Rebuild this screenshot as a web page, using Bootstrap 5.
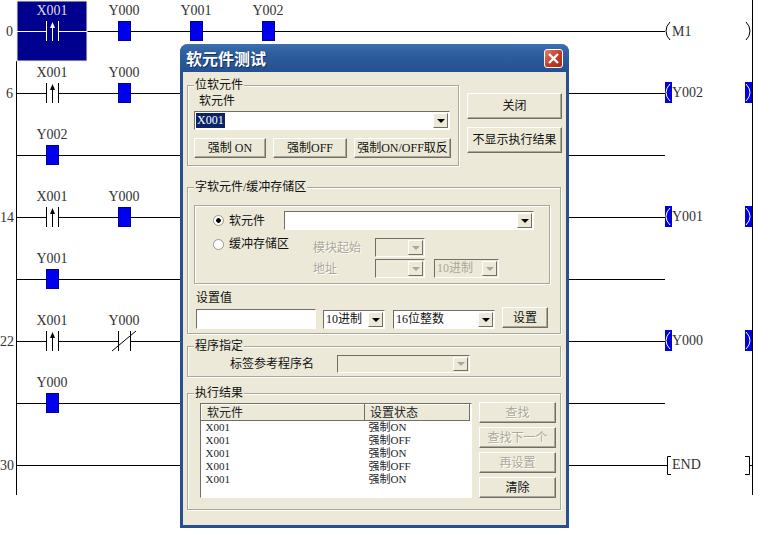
<!DOCTYPE html>
<html lang="zh-CN">
<head>
  <meta charset="UTF-8">
  <title>软元件测试</title>
  <meta name="viewport" content="width=device-width, initial-scale=1">
  <link href="https://cdn.jsdelivr.net/npm/bootstrap@5.3.2/dist/css/bootstrap.min.css" rel="stylesheet">
  <style>
    html, body { width: 778px; height: 535px; overflow: hidden; background: #fff; }
    body { position: relative; font: 12px/16px "Liberation Serif", "Noto Sans CJK SC", serif; color: #111; }

    /* ladder canvas */
    .ladder { position: absolute; left: 0; top: 0; }
    .ladder text { font: 14px "Liberation Serif", serif; fill: #333; }
    .ladder .num { text-anchor: end; }
    .ladder .dev { text-anchor: middle; }
    .ladder .dev-sel { fill: #ddd; }
    .ladder .wire { stroke: #000; stroke-width: 1; fill: none; }
    .ladder .wire-w { stroke: #fff; stroke-width: 1; fill: none; }
    .ladder .block { fill: #0000ee; stroke: #00009a; stroke-width: 1; }
    .ladder .coil-b { fill: #0000d8; }

    /* dialog window */
    .dlg { position: absolute; left: 180px; top: 44px; width: 389px; height: 484px; background: #ece9d8;
      border: 3px solid #28508f; border-top: 0; border-radius: 8px 8px 0 0; }
    .dlg-title { height: 28px; margin: 0 -3px; padding: 0 6px; border-radius: 8px 8px 0 0;
      background: linear-gradient(#3d70b0, #2f5f9f 30%, #24508f); }
    .dlg-title span { font: 700 16px/28px "Noto Sans CJK SC", sans-serif; color: #fff; text-shadow: 1px 1px 0 #14305e; }
    .dlg-close { width: 19px; height: 19px; flex: none; border: 1px solid #fff; border-radius: 3px;
      background: linear-gradient(135deg, #e0806c, #c63a26 55%, #a82a1c); }
    .dlg-body { padding: 13px 4px 0; }

    .grp { position: relative; border: 1px solid #aca899; box-shadow: inset 1px 1px 0 #fff, 1px 1px 0 #fff; }
    .grp-name { position: absolute; left: 6px; top: -9px; padding: 0 1px; background: #ece9d8; line-height: 16px; }
    .grp-bit { width: 272px; height: 81px; padding-top: 7px; }
    .grp-word { width: 374px; height: 147px; margin-top: 21px; padding-top: 17px; }
    .grp-prog { width: 374px; height: 31px; margin-top: 12px; padding-top: 8px; }
    .grp-res { width: 374px; height: 117px; margin-top: 16px; padding-top: 9px; }
    .grp-inner { width: 356px; height: 79px; margin-left: 6px; padding-top: 5px; }

    /* raised win buttons */
    .btn.wbtn { --bs-btn-padding-x: 0; --bs-btn-padding-y: 0; --bs-btn-font-size: 12px; --bs-btn-line-height: 1;
      --bs-btn-color: #111; --bs-btn-bg: #ece9d8; --bs-btn-border-radius: 0; --bs-btn-border-width: 1px;
      --bs-btn-disabled-opacity: 1; --bs-btn-disabled-color: #aca899; --bs-btn-disabled-bg: #ece9d8;
      border-color: #fff #716f64 #716f64 #fff; box-shadow: inset -1px -1px 0 #aca899;
      font-family: "Liberation Serif", "Noto Sans CJK SC", serif; white-space: nowrap; }
    .btn.wbtn:disabled { border-color: #fff #716f64 #716f64 #fff; text-shadow: 1px 1px 0 #fff; }
    .side-col { width: 95px; margin-left: 8px; margin-top: 8px; }
    .side-col .wbtn { height: 26px; }
    .force-row { margin: 8px 0 0 6px; gap: 7px; }
    .force-row .wbtn { height: 20px; }
    .force-row .wbtn:nth-child(1) { width: 72px; }
    .force-row .wbtn:nth-child(2) { width: 74px; }
    .force-row .wbtn:nth-child(3) { width: 97px; }
    .res-col { width: 77px; margin-left: 7px; margin-top: -1px; }
    .res-col .wbtn { height: 21px; }
    .btn.btn-set { width: 46px; height: 21px; margin-left: 7px; }

    /* combos and inputs */
    .cmb { height: 19px; background: #fff; border: 1px solid; border-color: #716f64 #fff #fff #716f64;
      padding: 1px; line-height: 15px; }
    .cmb-txt { padding-left: 1px; overflow: hidden; white-space: nowrap; }
    .cmb-arr { width: 15px; margin-left: auto; background: #ece9d8; border: 1px solid;
      border-color: #fff #716f64 #716f64 #fff; flex: none; }
    .cmb-arr::after { content: ""; border: 4px solid transparent; border-top: 4px solid #000; border-bottom: 0; }
    .cmb-off { background: #ece9d8; color: #aca899; }
    .cmb-off .cmb-arr::after { border-top-color: #aca899; }
    .sel-txt { background: #0a246a; color: #fff; padding: 0 1px; line-height: 14px; }
    .txt-off { color: #aca899; text-shadow: 1px 1px 0 #fff; }
    .val-in { width: 120px; height: 20px; background: #fff; border: 1px solid; border-color: #716f64 #fff #fff #716f64; }
    .cmb-bit { width: 256px; margin: 2px 0 0 6px; }
    .cmb-dev { width: 250px; }
    .cmb-mod { width: 50px; }
    .cmb-radix { width: 65px; margin-left: 9px; }
    .cmb-a { width: 62px; margin-left: 7px; }
    .cmb-b { width: 102px; margin-left: 8px; }
    .cmb.cmb-prog { width: 133px; height: 18px; }

    /* labels and rows */
    .lbl-dev { height: 16px; margin-left: 11px; }
    .row-dev { padding-left: 18px; }
    .lbl-kind { width: 55px; }
    .row-buf { margin-top: 8px; padding-left: 18px; }
    .col-buf { width: 100px; height: 12px; }
    .lbl-addr { width: 62px; }
    .row-addr { margin-top: 2px; }
    .lbl-val { margin: 6px 0 0 8px; height: 16px; }
    .row-val { height: 22px; margin: 1px 0 0 8px; }
    .lbl-prog { width: 107px; margin-left: 42px; }

    /* radios */
    .rad.form-check-input { width: 11px; height: 11px; margin: 0 5px 0 0; float: none; flex: none;
      border: 1px solid #9a988c; background-color: #fff; background-image: none; }
    .rad.form-check-input:checked { background-color: #fff; border-color: #9a988c;
      background-image: radial-gradient(circle, #000 2px, transparent 2.6px); }

    /* result list */
    .res-list { width: 272px; height: 95px; margin-left: 12px; background: #fff; border: 1px solid;
      border-color: #716f64 #fff #fff #716f64; overflow: hidden; }
    .res-list .table { --bs-table-bg: transparent; width: 268px; table-layout: fixed; margin: 0; font-size: 11px; }
    .res-list th { height: 16px; padding: 0 0 0 5px; font-weight: 400; font-size: 12px; line-height: 14px; background: #ece9d8;
      border: 1px solid; border-color: #fff #716f64 #716f64 #fff; }
    .res-list td { height: 13px; padding: 0 0 0 4px; border: 0; line-height: 13px; }
    .col-a { width: 163px; }
    .col-b { width: 105px; }
  </style>
</head>
<body>

  <!-- ladder: free canvas -->
  <svg class="ladder" width="778" height="535" viewBox="0 0 778 535">
    <defs>
      <symbol id="rise" width="14" height="20" overflow="visible">
        <path d="M.5 0V20M12.5 0V20M6.5 4V20" stroke="currentColor" fill="none"/>
        <path d="M6.5 1L4 7H9Z" fill="currentColor"/>
      </symbol>
    </defs>

    <path class="wire" d="M16.5 61V495M752.5 0V495"/>

    <text class="num" x="13" y="36">0</text>
    <text class="num" x="13" y="98">6</text>
    <text class="num" x="14" y="222">14</text>
    <text class="num" x="14" y="346">22</text>
    <text class="num" x="14" y="470">30</text>

    <!-- rung 0 -->
    <path class="wire" d="M87 31.5H665"/>
    <rect x="17" y="1" width="70" height="60" fill="#00008f" stroke="#f4f0c8"/>
    <path class="wire-w" d="M17 31.5H46M59 31.5H87"/>
    <use href="#rise" x="46" y="21" color="#fff"/>
    <text class="dev dev-sel" x="52" y="15">X001</text>
    <text class="dev" x="124" y="15">Y000</text>
    <text class="dev" x="196" y="15">Y001</text>
    <text class="dev" x="268" y="15">Y002</text>
    <rect class="block" x="118.5" y="21.5" width="12" height="19"/>
    <rect class="block" x="190.5" y="21.5" width="12" height="19"/>
    <rect class="block" x="262.5" y="21.5" width="12" height="19"/>
    <path class="wire" d="M670 22Q666 26 666 31Q666 36 670 40"/>
    <text x="672" y="36">M1</text>
    <path class="wire" d="M746 22Q750 26 750 31Q750 36 746 40"/>

    <!-- rung 6 -->
    <path class="wire" d="M17 93.5H46M59 93.5H665"/>
    <use href="#rise" x="46" y="83" color="#000"/>
    <text class="dev" x="52" y="77">X001</text>
    <text class="dev" x="124" y="77">Y000</text>
    <rect class="block" x="118.5" y="83.5" width="12" height="19"/>
    <rect class="coil-b" x="665" y="82" width="7" height="21"/>
    <path class="wire-w" d="M670 84Q666 88 666 92.5Q666 97 670 101"/>
    <text x="672" y="97">Y002</text>
    <rect class="coil-b" x="745" y="82" width="7" height="21"/>
    <path class="wire-w" d="M746 84Q750 88 750 92.5Q750 97 746 101"/>

    <!-- rung 6 branch -->
    <path class="wire" d="M17 155.5H665"/>
    <text class="dev" x="52" y="139">Y002</text>
    <rect class="block" x="46.5" y="145.5" width="12" height="19"/>

    <!-- rung 14 -->
    <path class="wire" d="M17 217.5H46M59 217.5H665"/>
    <use href="#rise" x="46" y="207" color="#000"/>
    <text class="dev" x="52" y="201">X001</text>
    <text class="dev" x="124" y="201">Y000</text>
    <rect class="block" x="118.5" y="207.5" width="12" height="19"/>
    <rect class="coil-b" x="665" y="206" width="7" height="21"/>
    <path class="wire-w" d="M670 208Q666 212 666 216.5Q666 221 670 225"/>
    <text x="672" y="221">Y001</text>
    <rect class="coil-b" x="745" y="206" width="7" height="21"/>
    <path class="wire-w" d="M746 208Q750 212 750 216.5Q750 221 746 225"/>

    <!-- rung 14 branch -->
    <path class="wire" d="M17 279.5H665"/>
    <text class="dev" x="52" y="263">Y001</text>
    <rect class="block" x="46.5" y="269.5" width="12" height="19"/>

    <!-- rung 22 -->
    <path class="wire" d="M17 341.5H46M59 341.5H118M131 341.5H665"/>
    <use href="#rise" x="46" y="331" color="#000"/>
    <path class="wire" d="M118.5 331V351M130.5 331V351M112 351L136 331"/>
    <text class="dev" x="52" y="325">X001</text>
    <text class="dev" x="124" y="325">Y000</text>
    <rect class="coil-b" x="665" y="330" width="7" height="21"/>
    <path class="wire-w" d="M670 332Q666 336 666 340.5Q666 345 670 349"/>
    <text x="672" y="345">Y000</text>
    <rect class="coil-b" x="745" y="330" width="7" height="21"/>
    <path class="wire-w" d="M746 332Q750 336 750 340.5Q750 345 746 349"/>

    <!-- rung 22 branch -->
    <path class="wire" d="M17 403.5H665"/>
    <text class="dev" x="52" y="387">Y000</text>
    <rect class="block" x="46.5" y="393.5" width="12" height="19"/>

    <!-- rung 30 -->
    <path class="wire" d="M17 465.5H667"/>
    <path class="wire" d="M671 456.5H667.5V474.5H671"/>
    <text x="672" y="469">END</text>
    <path class="wire" d="M745 456.5H749.5V474.5H745M749.5 465.5H752"/>
  </svg>

  <!-- force test dialog -->
  <div class="dlg">
    <div class="dlg-title d-flex align-items-center justify-content-between">
      <span>软元件测试</span>
      <div class="dlg-close d-flex align-items-center justify-content-center">
        <svg width="13" height="13" viewBox="0 0 13 13"><path d="M2 2L11 11M11 2L2 11" stroke="#fff" stroke-width="2.4"/></svg>
      </div>
    </div>

    <div class="dlg-body">
      <div class="d-flex">
        <div class="grp grp-bit">
          <div class="grp-name">位软元件</div>
          <div class="lbl-dev">软元件</div>
          <div class="cmb d-flex cmb-bit">
            <span class="sel-txt">X001</span>
            <span class="cmb-arr d-flex align-items-center justify-content-center"></span>
          </div>
          <div class="force-row d-flex">
            <button class="btn wbtn">强制 ON</button>
            <button class="btn wbtn">强制OFF</button>
            <button class="btn wbtn">强制ON/OFF取反</button>
          </div>
        </div>
        <div class="side-col d-flex flex-column gap-2">
          <button class="btn wbtn">关闭</button>
          <button class="btn wbtn">不显示执行结果</button>
        </div>
      </div>

      <div class="grp grp-word">
        <div class="grp-name">字软元件/缓冲存储区</div>
        <div class="grp grp-inner">
          <div class="d-flex align-items-center row-dev">
            <input class="form-check-input rad" type="radio" name="kind" checked>
            <span class="lbl-kind">软元件</span>
            <div class="cmb d-flex cmb-dev"><span class="cmb-arr d-flex align-items-center justify-content-center"></span></div>
          </div>
          <div class="d-flex row-buf">
            <div class="d-flex align-items-center col-buf">
              <input class="form-check-input rad" type="radio" name="kind">
              <span>缓冲存储区</span>
            </div>
            <div>
              <div class="d-flex align-items-center">
                <span class="txt-off lbl-addr">模块起始</span>
                <div class="cmb cmb-off d-flex cmb-mod"><span class="cmb-arr d-flex align-items-center justify-content-center"></span></div>
              </div>
              <div class="d-flex align-items-center row-addr">
                <span class="txt-off lbl-addr">地址</span>
                <div class="cmb cmb-off d-flex cmb-mod"><span class="cmb-arr d-flex align-items-center justify-content-center"></span></div>
                <div class="cmb cmb-off d-flex cmb-radix"><span class="cmb-txt">10进制</span><span class="cmb-arr d-flex align-items-center justify-content-center"></span></div>
              </div>
            </div>
          </div>
        </div>
        <div class="lbl-val">设置值</div>
        <div class="d-flex align-items-end row-val">
          <div class="val-in"></div>
          <div class="cmb d-flex cmb-a"><span class="cmb-txt">10进制</span><span class="cmb-arr d-flex align-items-center justify-content-center"></span></div>
          <div class="cmb d-flex cmb-b"><span class="cmb-txt">16位整数</span><span class="cmb-arr d-flex align-items-center justify-content-center"></span></div>
          <button class="btn wbtn align-self-start btn-set">设置</button>
        </div>
      </div>

      <div class="grp grp-prog">
        <div class="grp-name">程序指定</div>
        <div class="d-flex align-items-center">
          <span class="lbl-prog">标签参考程序名</span>
          <div class="cmb cmb-off d-flex cmb-prog"><span class="cmb-arr d-flex align-items-center justify-content-center"></span></div>
        </div>
      </div>

      <div class="grp grp-res">
        <div class="grp-name">执行结果</div>
        <div class="d-flex">
          <div class="res-list">
            <table class="table">
              <colgroup><col class="col-a"><col class="col-b"></colgroup>
              <thead><tr><th>软元件</th><th>设置状态</th></tr></thead>
              <tbody>
                <tr><td>X001</td><td>强制ON</td></tr>
                <tr><td>X001</td><td>强制OFF</td></tr>
                <tr><td>X001</td><td>强制ON</td></tr>
                <tr><td>X001</td><td>强制OFF</td></tr>
                <tr><td>X001</td><td>强制ON</td></tr>
              </tbody>
            </table>
          </div>
          <div class="res-col d-flex flex-column gap-1">
            <button class="btn wbtn" disabled>查找</button>
            <button class="btn wbtn" disabled>查找下一个</button>
            <button class="btn wbtn" disabled>再设置</button>
            <button class="btn wbtn">清除</button>
          </div>
        </div>
      </div>
    </div>
  </div>

  <script src="https://cdn.jsdelivr.net/npm/bootstrap@5.3.2/dist/js/bootstrap.bundle.min.js"></script>
</body>
</html>
